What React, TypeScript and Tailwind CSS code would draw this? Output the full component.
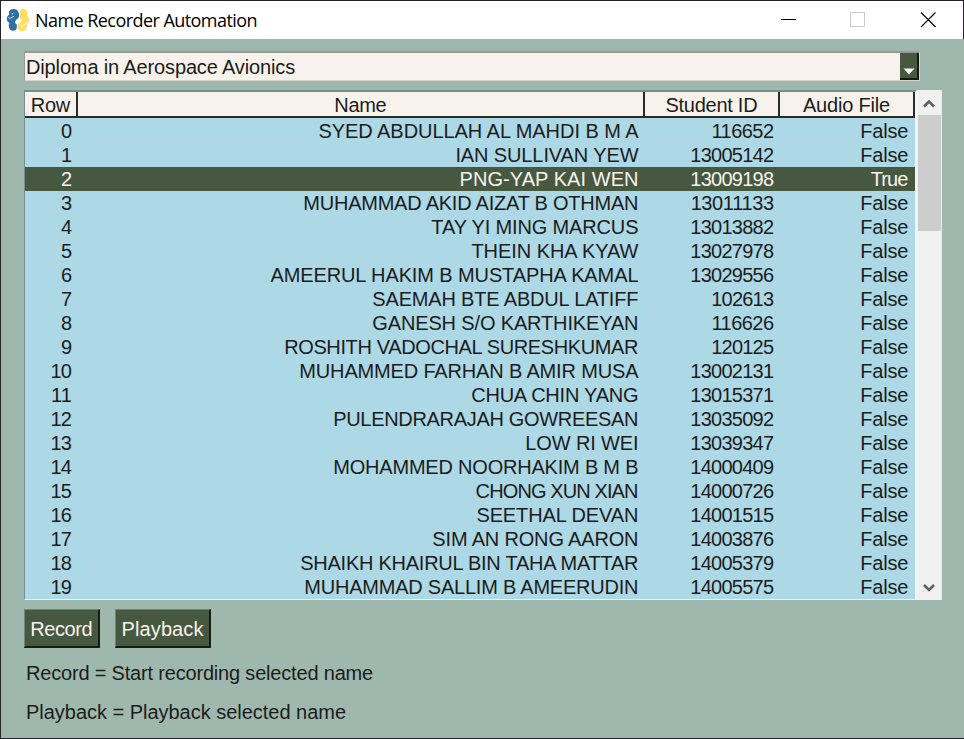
import { useLayoutEffect, useRef } from "react";

type FitProps = { text: string; width: number };

// Tracks a label so that it fills exactly the given advance width.
function Fit({ text, width }: FitProps) {
  const ref = useRef<HTMLSpanElement>(null);
  useLayoutEffect(() => {
    const el = ref.current;
    if (!el) return;
    el.style.letterSpacing = "0px";
    const natural = el.getBoundingClientRect().width;
    const step = (width - natural) / text.length;
    el.style.letterSpacing = `${step}px`;
    el.style.marginRight = `${-step}px`;
  }, [text, width]);
  return (
    <span ref={ref} className="inline-block whitespace-pre">
      {text}
    </span>
  );
}

type Row = [string, number, string, boolean];

const rows: Row[] = [
  ["SYED ABDULLAH AL MAHDI B M A", 320, "116652", false],
  ["IAN SULLIVAN YEW", 183, "13005142", false],
  ["PNG-YAP KAI WEN", 179, "13009198", true],
  ["MUHAMMAD AKID AIZAT B OTHMAN", 335, "13011133", false],
  ["TAY YI MING MARCUS", 207, "13013882", false],
  ["THEIN KHA KYAW", 167, "13027978", false],
  ["AMEERUL HAKIM B MUSTAPHA KAMAL", 368, "13029556", false],
  ["SAEMAH BTE ABDUL LATIFF", 266, "102613", false],
  ["GANESH S/O KARTHIKEYAN", 266, "116626", false],
  ["ROSHITH VADOCHAL SURESHKUMAR", 354, "120125", false],
  ["MUHAMMED FARHAN B AMIR MUSA", 339, "13002131", false],
  ["CHUA CHIN YANG", 167, "13015371", false],
  ["PULENDRARAJAH GOWREESAN", 305, "13035092", false],
  ["LOW RI WEI", 113, "13039347", false],
  ["MOHAMMED NOORHAKIM B M B", 305, "14000409", false],
  ["CHONG XUN XIAN", 162, "14000726", false],
  ["SEETHAL DEVAN", 162, "14001515", false],
  ["SIM AN RONG AARON", 206, "14003876", false],
  ["SHAIKH KHAIRUL BIN TAHA MATTAR", 338, "14005379", false],
  ["MUHAMMAD SALLIM B AMEERUDIN", 334, "14005575", false],
];

const columns = "grid grid-cols-[53px_567px_135px_135px]";

function Logo() {
  return (
    <svg width="24" height="24" viewBox="0 0 24 24">
      <path
        d="M7.500 1C5 1 2.800 2.500 2.800 4.800c0 .7.200 1.200.6 1.700C1.700 7.500.8 9 .8 11c0 1.700 1 3.200 2.600 3.900-.5 1-.7 2-.7 3.100 0 3 2 4.700 4.600 4.700 2.200 0 3.500-1.300 3.500-3.200v-3.300c-1.100 0-1.600-.9-1.600-1.900 0-1.300.6-2 2-3.200 1.300-1.100 1.900-2.200 1.900-3.900C13 3 10.800 1 7.500 1Z"
        fill="#306f9f"
      />
      <path
        d="M16.800 1c3 0 5 1.700 5 4.300 0 1-.3 1.900-.9 2.600 1.500.7 2.200 2 2.200 3.500 0 1.900-1 3.300-2.700 4 .5.7.8 1.500.8 2.500 0 3-2.200 5-5.200 5-2.800 0-4.700-1.600-4.700-4 0-2.200 1.100-3.500 3-4.900 1.200-.9 1.600-1.700 1.300-2.600-.3-.8-1-1.100-2-.8V5.200C13.600 2.600 14.700 1 16.800 1Z"
        fill="#ffdf63"
      />
      <path d="M2.300 9.300c.7.900 1.700 1 2.700.6l3-1.700M14 17.300c1.200 1 2.500.8 3.500 0l2.500-2" fill="none" stroke="white" strokeWidth=".8" />
      <circle cx="6.500" cy="5.800" r=".8" fill="white" />
      <circle cx="15.500" cy="19.300" r=".8" fill="white" />
    </svg>
  );
}

export default function App() {
  return (
    <div className="flex h-[739px] w-[964px] flex-col overflow-hidden border-y border-l border-[#252326] bg-[#9fb8ad] font-['Liberation_Sans',Arial,sans-serif] text-[20px] text-[#1c1c1c]">
      <header className="flex h-[38px] shrink-0 items-center border-r border-[#252326] bg-white pl-[5px]">
        <Logo />
        <h1 className="ml-[5px] font-['Open_Sans',sans-serif] text-[18px] leading-[36px] text-black">
          <Fit text="Name Recorder Automation" width={222} />
        </h1>
        <div className="ml-auto flex">
          <svg width="182" height="38" viewBox="781 1 182 38" fill="none" shapeRendering="crispEdges">
            <path d="M781 19.500h15" stroke="#000" />
            <rect x="850.500" y="12.500" width="14" height="14" stroke="#ccc" />
            <path d="M921 12.500l14.500 14.500M935.500 12.500L921 27" stroke="#000" shapeRendering="auto" strokeWidth="1.100" />
          </svg>
        </div>
      </header>
      <main className="flex flex-col pl-[22px] pt-3">
        <div className="ml-px flex h-[30px] w-[896px] border-b border-r border-l border-t-2 border-t-[#9b9893] border-l-[#9b9893] border-b-[#d8d5ce] border-r-[#d8d5ce] bg-[#f7f3ec]">
          <div className="grow pl-px leading-[28px]">
            <Fit text="Diploma in Aerospace Avionics" width={269} />
          </div>
          <div className="flex w-[19px] items-end justify-center border-b-2 border-r-2 border-[#151914] bg-[#475841] pb-[3px]">
            <svg width="12" height="7" viewBox="0 0 12 7">
              <path d="M0.500 0.500h11L6 6.500z" fill="white" />
            </svg>
          </div>
        </div>
        <div className="mt-[9px] ml-px flex h-[510px]">
          <section className="w-[893px] shrink-0 border-b border-l border-r-2 border-t-2 border-b-[#e8f3f5] border-l-[#788f92] border-r-[#f1f5f5] border-t-[#788f92] bg-[#add8e6]">
            <div className={`${columns} mb-px h-[26px] bg-[#f7f3ec] text-center leading-[27px]`}>
              {([["Row", 39], ["Name", 52], ["Student ID", 92], ["Audio File", 87]] as [string, number][]).map(([label, width]) => (
                <div key={label} className="h-[26px] border-b-2 border-r-2 border-b-[#292b29] border-r-[#292b29]">
                  <Fit text={label} width={width} />
                </div>
              ))}
            </div>
            {rows.map(([name, width, id, audio], i) => (
              <div key={id} className={`${columns} h-6 text-right leading-6 ${i === 2 ? "bg-[#475841] text-[#f7f3ec]" : ""}`}>
                <div className="pr-1.5"><Fit text={String(i)} width={i > 9 ? 21 : 11} /></div>
                <div className="pr-[6.5px]"><Fit text={name} width={width} /></div>
                <div className="pr-1.5"><Fit text={id} width={id.length === 8 ? 83 : 62} /></div>
                <div className="pr-[6.5px]"><Fit text={audio ? "True" : "False"} width={audio ? 37 : 48} /></div>
              </div>
            ))}
          </section>
          <div className="flex w-[25px] flex-col border-r border-r-[#e9ecea] bg-[#f0f0f0]">
            <div className="flex h-[25px] items-center justify-center">
              <svg width="12" height="10" viewBox="0 0 12 10"><path d="M1 8.500l5-5 5 5" fill="none" stroke="#606060" strokeWidth="2.600" /></svg>
            </div>
            <div className="ml-px h-[116px] bg-[#cdcdcd]" />
            <div className="mt-auto flex h-[25px] items-center justify-center">
              <svg width="12" height="10" viewBox="0 0 12 10"><path d="M1 2l5 5 5-5" fill="none" stroke="#606060" strokeWidth="2.600" /></svg>
            </div>
          </div>
        </div>
        <div className="mt-[9px] ml-px flex gap-[15px] text-[#f7f3ec]">
          {([["Record", "w-[76px]", 62], ["Playback", "w-[96px]", 82]] as [string, string, number][]).map(([label, size, width]) => (
            <button key={label} className={`${size} h-[39px] border-b-2 border-l border-r-2 border-t border-b-[#171d15] border-r-[#171d15] border-l-[#748573] border-t-[#748573] bg-[#475841] text-center leading-[38px]`}>
              <Fit text={label} width={width} />
            </button>
          ))}
        </div>
        <p className="mt-[13px] pl-[3px] leading-6"><Fit text="Record = Start recording selected name" width={347} /></p>
        <p className="mt-[15px] pl-[3px] leading-6"><Fit text="Playback = Playback selected name" width={320} /></p>
      </main>
    </div>
  );
}
